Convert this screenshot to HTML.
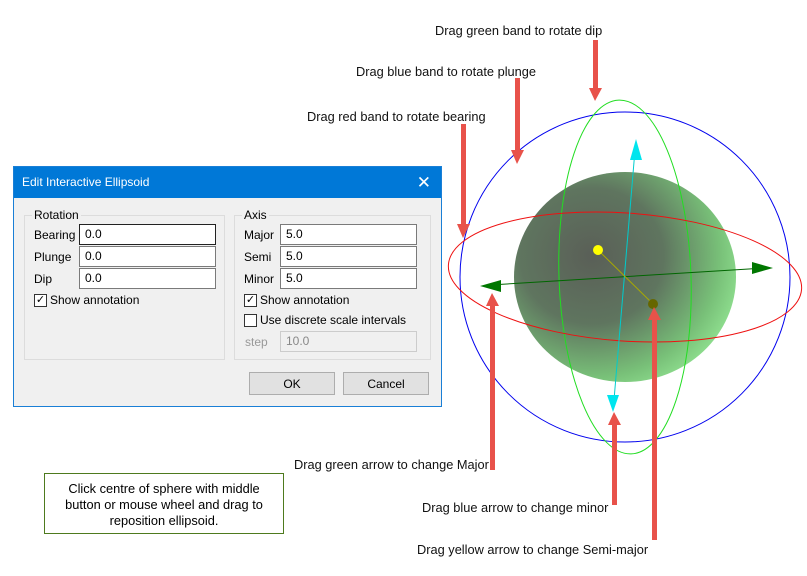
<!DOCTYPE html>
<html><head><meta charset="utf-8"><style>
body{margin:0;width:807px;height:576px;background:#fff;position:relative;overflow:hidden;font-family:"Liberation Sans",Arial,sans-serif;}
.lbl{position:absolute;font-size:12.8px;color:#111;white-space:nowrap;}
.dlg{position:absolute;left:13px;top:166px;width:427px;height:239px;border:1px solid #1a7fd6;background:#f0f0f0;font-size:12px;color:#000;}
.tb{height:31px;background:#0078d7;color:#fff;line-height:31px;padding-left:8px;font-size:12px;position:relative;}
.x{position:absolute;right:10px;top:0;font-size:17px;}
.grp{position:absolute;border:1px solid #dcdcdc;}
.gt{position:absolute;top:-8px;left:7px;background:#f0f0f0;padding:0 2px;}
.t{position:absolute;}
.in{position:absolute;background:#fff;border:1px solid #7a7a7a;line-height:19px;padding-left:5px;box-sizing:border-box;height:21px;}
.cb{position:absolute;width:11px;height:11px;border:1px solid #333;background:#fff;font-size:11px;line-height:11px;text-align:center;}
.btn{position:absolute;background:#e1e1e1;border:1px solid #adadad;height:23px;line-height:23px;text-align:center;box-sizing:border-box;}
</style></head><body>
<svg width="807" height="576" style="position:absolute;left:0;top:0">
<defs>
<radialGradient id="sg" cx="0.35" cy="0.4" r="0.72">
<stop offset="0" stop-color="#5a5f57"/><stop offset="0.45" stop-color="#5f755f"/><stop offset="0.8" stop-color="#78c078"/><stop offset="1" stop-color="#94e694"/>
</radialGradient>
</defs>
<ellipse cx="625" cy="277" rx="111" ry="105" fill="url(#sg)"/>
<circle cx="625" cy="277" r="165" fill="none" stroke="#0000ee" stroke-width="1"/>
<ellipse cx="625" cy="277" rx="66" ry="177" fill="none" stroke="#22dd22" stroke-width="1" transform="rotate(-2 625 277)"/>
<ellipse cx="625" cy="277" rx="177" ry="64" fill="none" stroke="#ee1111" stroke-width="1" transform="rotate(4 625 277)"/>
<line x1="490" y1="285" x2="765" y2="268" stroke="#006600" stroke-width="1"/>
<polygon points="480,286 501,280 501,292" fill="#007700"/>
<polygon points="773,268 752,262 752,274" fill="#007700"/>
<line x1="635" y1="150" x2="614" y2="400" stroke="#00cccc" stroke-width="1"/>
<polygon points="636,139 630,160 642,160" fill="#00e5ee"/>
<polygon points="613,412 607,395 619,395" fill="#00e5ee"/>
<line x1="598" y1="250" x2="653" y2="304" stroke="#aaaa00" stroke-width="1"/>
<circle cx="598" cy="250" r="5" fill="#ffff00"/>
<circle cx="653" cy="304" r="5" fill="#666600"/>
<g fill="#e8524a" stroke="none">
<rect x="593" y="40" width="5" height="50"/><polygon points="589,88 602,88 595,101"/>
<rect x="515" y="78" width="5" height="73"/><polygon points="511,150 524,150 517,164"/>
<rect x="461" y="124" width="5" height="101"/><polygon points="457,224 470,224 463,238"/>
<rect x="490" y="305" width="5" height="165"/><polygon points="486,306 499,306 492,293"/>
<rect x="612" y="424" width="5" height="81"/><polygon points="608,425 621,425 614,412"/>
<rect x="652" y="319" width="5" height="221"/><polygon points="648,320 661,320 654,307"/>
</g>
</svg>
<div class="lbl" style="left:435px;top:23px">Drag green band to rotate dip</div>
<div class="lbl" style="left:356px;top:64px">Drag blue band to rotate plunge</div>
<div class="lbl" style="left:307px;top:109px">Drag red band to rotate bearing</div>
<div class="lbl" style="left:294px;top:457px">Drag green arrow to change Major</div>
<div class="lbl" style="left:422px;top:500px">Drag blue arrow to change minor</div>
<div class="lbl" style="left:417px;top:542px">Drag yellow arrow to change Semi-major</div>
<div style="position:absolute;left:44px;top:473px;width:240px;height:61px;border:1px solid #4e7a1e;font-size:12.8px;text-align:center;line-height:16px;box-sizing:border-box;padding:7px 14px 0;">Click centre of sphere with middle button or mouse wheel and drag to reposition ellipsoid.</div>
<div class="dlg">
<div class="tb">Edit Interactive Ellipsoid<span class="x">✕</span></div>
<div class="grp" style="left:10px;top:48px;width:199px;height:143px"><span class="gt">Rotation</span></div>
<div class="grp" style="left:220px;top:48px;width:195px;height:143px"><span class="gt">Axis</span></div>
<div class="t" style="left:20px;top:61px">Bearing</div>
<div class="t" style="left:20px;top:83px">Plunge</div>
<div class="t" style="left:20px;top:105px">Dip</div>
<div class="in" style="left:65px;top:57px;width:137px;border-color:#222">0.0</div>
<div class="in" style="left:65px;top:79px;width:137px">0.0</div>
<div class="in" style="left:65px;top:101px;width:137px">0.0</div>
<div class="cb" style="left:20px;top:127px">✓</div><div class="t" style="left:36px;top:126px">Show annotation</div>
<div class="t" style="left:230px;top:61px">Major</div>
<div class="t" style="left:230px;top:83px">Semi</div>
<div class="t" style="left:230px;top:105px">Minor</div>
<div class="in" style="left:266px;top:57px;width:137px">5.0</div>
<div class="in" style="left:266px;top:79px;width:137px">5.0</div>
<div class="in" style="left:266px;top:101px;width:137px">5.0</div>
<div class="cb" style="left:230px;top:127px">✓</div><div class="t" style="left:246px;top:126px">Show annotation</div>
<div class="cb" style="left:230px;top:147px"></div><div class="t" style="left:246px;top:146px">Use discrete scale intervals</div>
<div class="t" style="left:231px;top:168px;color:#999">step</div>
<div class="in" style="left:266px;top:164px;width:137px;background:#f0f0f0;border-color:#ccc;color:#888">10.0</div>
<div class="btn" style="left:235px;top:205px;width:86px">OK</div>
<div class="btn" style="left:329px;top:205px;width:86px">Cancel</div>
</div>
</body></html>
